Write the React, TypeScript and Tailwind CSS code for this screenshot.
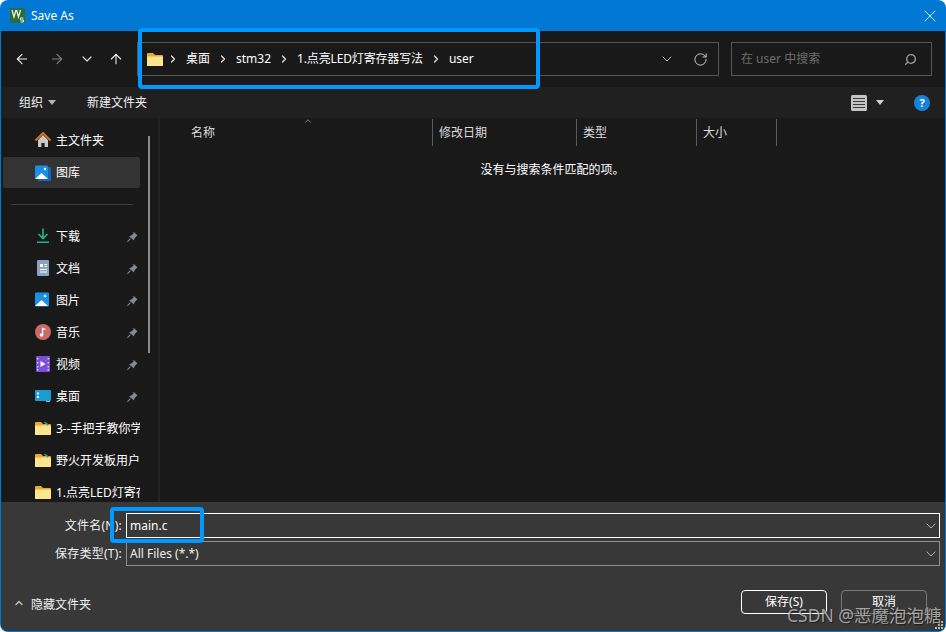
import { ArrowLeft, ArrowRight, ArrowUp, ChevronDown, ChevronRight, ChevronUp, RotateCw, Search, X } from "lucide-react";
import type { ReactNode } from "react";

const font = "[font-family:'Noto_Sans','Noto_Sans_CJK_SC',sans-serif]";

function KeilLogo() {
    return (
        <svg className="h-[15px] w-[15px] shrink-0" viewBox="0 0 15 15" aria-hidden="true">
            <rect width="15" height="15" rx="1" fill="#2f6b35" />
            <path d="M2 2l2 7 2-7M6.5 2l2 7 2-7" fill="none" stroke="#e8f2e8" strokeWidth="1.3" />
            <path d="M13.5 10h-3v2h3v2h-3" fill="none" stroke="#e8f2e8" strokeWidth="1" />
        </svg>
    );
}

function FolderIcon({ badge }: { badge?: boolean }) {
    return (
        <svg className="h-[14px] w-4 shrink-0" viewBox="0 0 16 14" aria-hidden="true">
            <path d="M0 2a1 1 0 0 1 1-1h5l2 2h7a1 1 0 0 1 1 1v9a1 1 0 0 1-1 1H1a1 1 0 0 1-1-1Z" fill="#e9a92c" />
            <path d="M0 5.5a1 1 0 0 1 1-1h14a1 1 0 0 1 1 1V13a1 1 0 0 1-1 1H1a1 1 0 0 1-1-1Z" fill="#fde58f" />
            {badge && <path d="M10 0.5l4 3-1.5 1-3.5-3Z" fill="#3f8fb0" />}
        </svg>
    );
}

function HomeIcon() {
    return (
        <svg className="h-4 w-4" viewBox="0 0 16 16" aria-hidden="true">
            <path d="M3 8l5-5 5 5v7H9.6v-4H6.4v4H3Z" fill="#c9c9c9" />
            <path d="M0.5 8.5L8 1l7.5 7.5" fill="none" stroke="#d9701c" strokeWidth="2" />
        </svg>
    );
}

function PictureIcon({ stacked }: { stacked?: boolean }) {
    return (
        <svg className="h-4 w-4" viewBox="0 0 16 16" aria-hidden="true">
            {stacked && <rect x="3" y="2" width="13" height="14" rx="1" fill="#1565b8" />}
            <rect x="0" y="0.5" width={stacked ? 13 : 14} height={stacked ? 13.5 : 14} rx="1" fill="#1a8fe3" />
            <path d="M0 14l6.5-6 6.5 6Z" fill="#ffffff" />
            <circle cx="10" cy="4" r="1.2" fill="#ffffff" />
        </svg>
    );
}

function DownloadIcon() {
    return (
        <svg className="h-4 w-4" viewBox="0 0 16 16" aria-hidden="true">
            <path d="M8 0.5V10M3.5 6L8 10.5 12.5 6" fill="none" stroke="#22b28c" strokeWidth="1.7" />
            <rect x="2" y="13.5" width="12" height="1.5" fill="#22b28c" />
        </svg>
    );
}

function DocIcon() {
    return (
        <svg className="h-4 w-4" viewBox="0 0 16 16" aria-hidden="true">
            <rect x="2" y="0" width="12" height="16" rx="1" fill="#8aa3c2" />
            <path d="M5 4h3v3H5ZM9.5 4H12v1H9.5ZM9.5 6H12v1H9.5ZM5 9h7v1H5ZM5 11.5h7v1H5Z" fill="#ffffff" />
        </svg>
    );
}

function MusicIcon() {
    return (
        <svg className="h-4 w-4" viewBox="0 0 16 16" aria-hidden="true">
            <circle cx="8" cy="8" r="8" fill="#c96a68" />
            <circle cx="6.5" cy="11" r="1.8" fill="#ffffff" />
            <path d="M7.6 11V4.5l3 1" fill="none" stroke="#ffffff" strokeWidth="1.3" />
        </svg>
    );
}

function VideoIcon() {
    return (
        <svg className="h-4 w-4" viewBox="0 0 16 16" aria-hidden="true">
            <rect width="14" height="16" x="1" rx="1" fill="#7c4fd8" />
            <path d="M5.5 5v6l5-3Z" fill="#ffffff" />
            <path d="M2 2h1.4v1.6H2ZM2 6h1.4v1.6H2ZM2 10h1.4v1.6H2ZM2 13h1.4v1.6H2ZM12.6 2H14v1.6h-1.4ZM12.6 6H14v1.6h-1.4ZM12.6 10H14v1.6h-1.4ZM12.6 13H14v1.6h-1.4Z" fill="#d9c8ff" />
        </svg>
    );
}

function DesktopIcon() {
    return (
        <svg className="h-4 w-4" viewBox="0 0 16 16" aria-hidden="true">
            <rect y="2" width="16" height="11" rx="1" fill="#1a9ccf" />
            <path d="M2 4.5h2v2H2ZM2 8h2v2H2Z" fill="#ffffff" />
            <rect x="11" y="13" width="4" height="1" fill="#67c6e8" />
        </svg>
    );
}

function PinIcon() {
    return (
        <svg className="h-[11px] w-[11px] shrink-0" viewBox="0 0 12 12" aria-hidden="true">
            <path d="M7 0.5l4.5 4.5-1.2.6-2.3 2.9-.4 1.8L2.3 5.6l1.8-.4L7 2.9Z" fill="#7f8a94" />
            <path d="M3.8 8.2L0.5 11.5" stroke="#7f8a94" strokeWidth="1.2" />
        </svg>
    );
}

function Caret({ color = "#b4b4b4" }: { color?: string }) {
    return (
        <svg className="h-[5px] w-2" viewBox="0 0 8 5" aria-hidden="true">
            <path d="M0 0h8L4 5Z" fill={color} />
        </svg>
    );
}

function NavItem({ icon, label, pinned, selected }: { icon: ReactNode; label: string; pinned?: boolean; selected?: boolean }) {
    return (
        <div className={`flex items-center pl-[30px] ${selected ? "mt-px h-[31px] rounded-[2px] bg-[#333333]" : "h-8"}`}>
            <span className="flex w-[20px] shrink-0 justify-center">{icon}</span>
            <span className={`ml-[3px] overflow-hidden whitespace-nowrap text-[12px] text-white ${selected ? "pt-0" : "pt-[2px]"} ${pinned ? "w-[71px]" : "min-w-0 flex-1"}`}>{label}</span>
            {pinned && <PinIcon />}
        </div>
    );
}

function Crumb({ label, tight }: { label: string; tight?: boolean }) {
    return (
        <>
            <ChevronRight className="mx-[6px] h-3 w-3 text-[#e6e6e6]" strokeWidth={2.5} />
            <span className={`whitespace-nowrap px-[1px] text-[12px] text-white ${tight ? "tracking-[-0.15px]" : ""}`}>{label}</span>
        </>
    );
}

function ColumnHead({ label, width }: { label: string; width: string }) {
    return (
        <div className={`flex h-[27px] shrink-0 items-center border-r border-[#5a5a5a] pl-[6px] pt-px text-[12px] text-[#dcdcdc] ${width}`}>
            {label}
        </div>
    );
}

export default function App() {
    return (
        <div className={`relative h-[632px] w-[946px] overflow-hidden bg-white ${font}`}>
            <div className="flex h-full flex-col overflow-hidden rounded-[8px] bg-[#0078d4]">
                {/* Title bar */}
                <div className="flex h-[31px] shrink-0 items-center pl-[10px] pr-[6px]">
                    <KeilLogo />
                    <span className="ml-[6px] text-[12px] text-white">Save As</span>
                    <X className="ml-auto h-5 w-5 text-white" strokeWidth={1} />
                </div>

                <div className="mx-px mb-px flex min-h-0 flex-1 flex-col overflow-hidden rounded-b-[7px] bg-[#191919]">
                    {/* Navigation row */}
                    <div className="flex h-[56px] shrink-0 items-center pl-[13px] pr-[13px]">
                        <ArrowLeft className="h-4 w-4 text-[#f0f0f0]" strokeWidth={1.6} />
                        <ArrowRight className="ml-[19px] h-4 w-4 text-[#808080]" strokeWidth={1.6} />
                        <ChevronDown className="ml-[14px] h-4 w-4 text-[#d8d8d8]" strokeWidth={1.8} />
                        <ArrowUp className="ml-[13px] h-4 w-4 text-[#f0f0f0]" strokeWidth={1.6} />
                        <div className="ml-[13px] flex h-[34px] w-[582px] items-center border border-[#555555] pl-[9px] pr-[10px]">
                            <FolderIcon />
                            <div className="-ml-[2px] flex items-center">
                                <Crumb label="桌面" />
                                <Crumb label="stm32" />
                                <Crumb label="1.点亮LED灯寄存器写法" tight />
                                <Crumb label="user" />
                            </div>
                            <ChevronDown className="ml-auto h-4 w-4 text-[#d8d8d8]" strokeWidth={1.3} />
                            <RotateCw className="ml-[18px] h-[15px] w-[15px] text-[#d8d8d8]" strokeWidth={1.5} />
                        </div>
                        <div className="ml-[12px] flex h-[34px] w-[201px] items-center border border-[#555555] pl-[9px] pr-[14px]">
                            <span className="text-[12px] text-[#6e6e6e]">在 user 中搜索</span>
                            <Search className="ml-auto h-[13px] w-[13px] -scale-x-100 text-[#a0a0a0]" strokeWidth={2.4} />
                        </div>
                    </div>

                    {/* Toolbar */}
                    <div className="flex h-[31px] shrink-0 items-center bg-[#202020] pl-[18px] pr-[15px] text-[12px] text-[#f0f0f0]">
                        <span>组织</span>
                        <span className="ml-[5px]"><Caret /></span>
                        <span className="ml-[31px]">新建文件夹</span>
                        <svg className="ml-auto h-4 w-4" viewBox="0 0 16 16" aria-hidden="true">
                            <rect width="16" height="16" rx="1.5" fill="#c4c4c4" />
                            <path d="M2 3.5h12M2 6.5h12M2 9.5h12M2 12.5h12" stroke="#3a3a3a" strokeWidth="1" />
                        </svg>
                        <span className="ml-[9px]"><Caret color="#d0d0d0" /></span>
                        <span className="ml-[30px] flex h-4 w-4 items-center justify-center rounded-full bg-[#1583dc] text-[11px] font-bold leading-none text-white">?</span>
                    </div>

                    {/* Sidebar + file list */}
                    <div className="flex min-h-0 flex-1">
                        <div className="flex w-[159px] shrink-0 overflow-hidden border-r-2 border-[#232323]">
                            <div className="w-[139px] shrink-0 overflow-hidden pl-[2px] pt-[6px]">
                                <NavItem icon={<HomeIcon />} label="主文件夹" />
                                <NavItem icon={<PictureIcon stacked />} label="图库" selected />
                                <div className="flex h-8 items-center pl-[8px]">
                                    <div className="h-px w-[122px] bg-[#3c3c3c]" />
                                </div>
                                <NavItem icon={<DownloadIcon />} label="下载" pinned />
                                <NavItem icon={<DocIcon />} label="文档" pinned />
                                <NavItem icon={<PictureIcon />} label="图片" pinned />
                                <NavItem icon={<MusicIcon />} label="音乐" pinned />
                                <NavItem icon={<VideoIcon />} label="视频" pinned />
                                <NavItem icon={<DesktopIcon />} label="桌面" pinned />
                                <NavItem icon={<FolderIcon badge />} label="3--手把手教你学STM32" />
                                <NavItem icon={<FolderIcon badge />} label="野火开发板用户手册" />
                                <NavItem icon={<FolderIcon />} label="1.点亮LED灯寄存器写法" />
                            </div>
                            <div className="ml-[8px] mt-[18px] h-[217px] w-[2px] shrink-0 bg-[#8a8a8a]" />
                        </div>

                        <div className="min-w-0 flex-1">
                            <div className="relative mt-px flex">
                                <div className="w-[273px] shrink-0 border-r border-[#5a5a5a] pl-[31px] pt-px text-[12px] leading-[26px] text-[#dcdcdc]">名称</div>
                                <ChevronUp className="absolute left-[143px] top-[-3px] h-[10px] w-[10px] text-[#9a9a9a]" strokeWidth={2} />
                                <ColumnHead label="修改日期" width="w-[144px]" />
                                <ColumnHead label="类型" width="w-[120px]" />
                                <ColumnHead label="大小" width="w-[80px]" />
                            </div>
                            <p className="mt-[15px] text-center text-[12px] leading-[18px] text-white">没有与搜索条件匹配的项。</p>
                        </div>
                    </div>

                    {/* Save form */}
                    <div className="flex h-[129px] shrink-0 flex-col bg-[#383838] pl-[4px] pr-[5px] pt-[11px] text-[12px] text-[#f0f0f0]">
                        <div className="flex items-center">
                            <span className="w-[117px] text-right tracking-[0.25px]">文件名(N):</span>
                            <div className="ml-[4px] flex h-[25px] flex-1 items-center border border-white pl-[3px] text-white">
                                <span>main.c</span>
                                <ChevronDown className="ml-auto h-4 w-4 text-[#c8c8c8]" strokeWidth={1.3} />
                            </div>
                        </div>
                        <div className="mt-[3px] flex items-center">
                            <span className="w-[117px] text-right tracking-[0.25px]">保存类型(T):</span>
                            <div className="ml-[4px] flex h-[25px] flex-1 items-center border border-[#8f8f8f] pl-[3px]">
                                <span>All Files (*.*)</span>
                                <ChevronDown className="ml-auto h-4 w-4 text-[#c8c8c8]" strokeWidth={1.3} />
                            </div>
                        </div>
                        <div className="mt-[23px] flex items-center pl-[8px] pr-[13px]">
                            <ChevronUp className="mt-[2px] h-3 w-3 text-[#c8c8c8]" strokeWidth={2.5} />
                            <span className="ml-[6px] mt-[7px]">隐藏文件夹</span>
                            <button className="ml-auto h-[24px] w-[86px] rounded-[4px] border border-white text-[12px] text-white">保存(S)</button>
                            <button className="ml-[14px] h-[24px] w-[86px] rounded-[4px] border border-[#787878] text-[12px] text-white">取消</button>
                        </div>
                    </div>
                </div>
            </div>

            {/* Blue annotation boxes drawn over the dialog */}
            <div className="absolute left-[138px] top-[28px] h-[61px] w-[402px] rounded-[4px] border-[4px] border-[#0099ff]" />
            <div className="absolute left-[110px] top-[507px] h-[36px] w-[94px] rounded-[4px] border-[4px] border-[#0099ff]" />

            {/* Resize grip */}
            <svg className="absolute left-[935px] top-[621px] h-[9px] w-[9px]" viewBox="0 0 9 9" aria-hidden="true">
                <path d="M6 0h2v2H6ZM3 3h2v2H3ZM6 3h2v2H6ZM0 6h2v2H0ZM3 6h2v2H3ZM6 6h2v2H6Z" fill="#b8b8b8" />
            </svg>

            {/* Watermark */}
            <div className="absolute left-[787px] top-[602px] whitespace-nowrap text-[17.5px] text-[#d8d8d8]/70 [text-shadow:1px_1px_1px_rgba(0,0,0,0.5)]">
                CSDN @恶魔泡泡糖
            </div>
        </div>
    );
}
